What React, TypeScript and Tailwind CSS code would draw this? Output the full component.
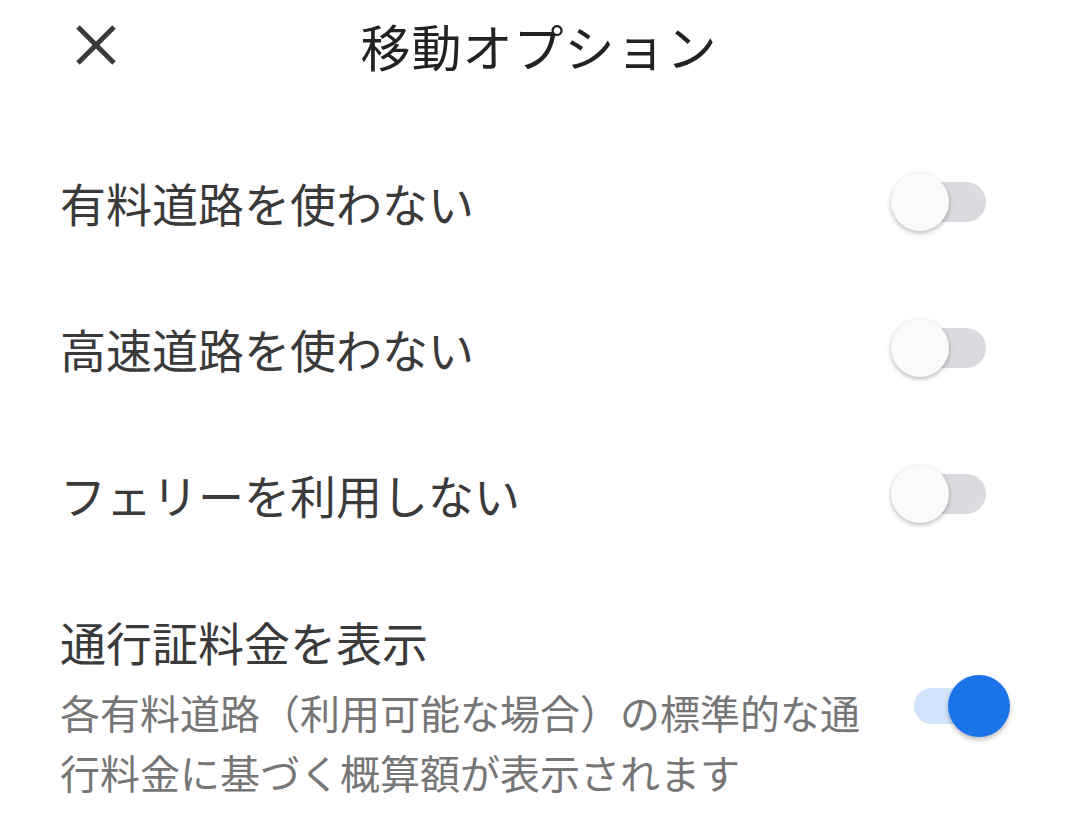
import React from "react";

const font = { fontFamily: '"Noto Sans CJK JP", "Noto Sans", sans-serif' };

function Toggle({ on }: { on: boolean }) {
  if (on) {
    return (
      <div className="relative h-[62px] w-[96px] shrink-0">
        <div className="absolute left-0 top-[13px] h-[36px] w-[80px] rounded-full bg-[#d2e3fc]" />
        <div className="absolute right-0 top-0 h-[62px] w-[62px] rounded-full bg-[#1a73e8] shadow-[0_3px_5px_rgba(0,0,0,0.25)]" />
      </div>
    );
  }
  return (
    <div className="relative h-[58px] w-[95px] shrink-0">
      <div className="absolute right-0 top-[9px] h-[40px] w-[80px] rounded-full bg-[#dadbde]" />
      <div className="absolute left-0 top-0 h-[58px] w-[58px] rounded-full bg-[#fafafa] shadow-[0_2px_5px_rgba(0,0,0,0.28)]" />
    </div>
  );
}

function Row({ label }: { label: string }) {
  return (
    <div className="flex h-[146px] items-center justify-between pl-[60px] pr-[92px]">
      <span className="text-[46px] leading-[60px] text-[#3a3a3a]">{label}</span>
      <Toggle on={false} />
    </div>
  );
}

export default function App() {
  return (
    <div className="h-[817px] w-[1078px] overflow-hidden bg-white" style={font}>
      <header className="grid h-[90px] grid-cols-[1fr_auto_1fr] items-center">
        <button className="ml-[74px] flex h-[44px] w-[44px] items-center justify-center">
          <svg width="42" height="40" viewBox="0 0 42 40">
            <path d="M3 2 L39 38 M39 2 L3 38" stroke="#3a3a3a" strokeWidth="5" />
          </svg>
        </button>
        <h1 className="text-[50px] leading-[60px] tracking-[1px] text-[#222]">移動オプション</h1>
        <div />
      </header>
      <div className="pt-[39px]">
        <Row label="有料道路を使わない" />
        <Row label="高速道路を使わない" />
        <Row label="フェリーを利用しない" />
        <div className="flex items-start justify-between pl-[60px] pr-[68px] pt-[44px]">
          <div className="w-[820px]">
            <div className="text-[46px] leading-[60px] text-[#3a3a3a]">通行証料金を表示</div>
            <p className="mt-[11px] text-[40px] leading-[60px] text-[#767676]">
              各有料道路（利用可能な場合）の標準的な通行料金に基づく概算額が表示されます
            </p>
          </div>
          <div className="mt-[64px]">
            <Toggle on />
          </div>
        </div>
      </div>
    </div>
  );
}
